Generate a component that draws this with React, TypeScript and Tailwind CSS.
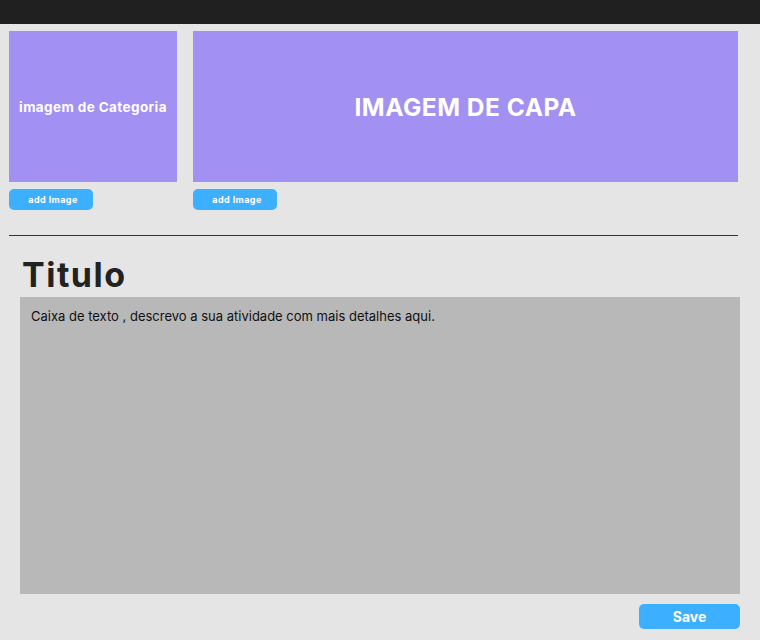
const font = "font-['Inter','Open_Sans',sans-serif]";

const ImageSlot = ({ label, className, textClass }: { label: string; className: string; textClass: string }) => (
  <div className={`flex flex-col gap-[7px] ${className}`}>
    <div className="flex h-[151px] items-center justify-center bg-[#a290f2]">
      <span className={`font-bold text-white ${textClass}`}>{label}</span>
    </div>
    <button className="flex h-[21px] w-[84px] items-center justify-center rounded-[5px] bg-[#3cb0ff] pl-1 text-[9px] tracking-[0.4px] font-bold text-white">
      add Image
    </button>
  </div>
);

export default function App() {
  return (
    <div className={`flex h-[640px] w-[760px] flex-col bg-[#e5e5e5] ${font}`}>
      <div className="h-6 bg-[#202020]" />
      <div className="flex gap-4 pl-[9px] pr-[22px] pt-[7px]">
        <ImageSlot label="imagem de Categoria" className="w-[168px]" textClass="text-[13.5px] tracking-[0.4px] mt-[2px]" />
        <ImageSlot label="IMAGEM DE CAPA" className="flex-1" textClass="text-[24.5px] tracking-[0.5px] mt-[2px]" />
      </div>
      <div className="mx-[9px] mr-[22px] mt-[25px] h-px bg-[#333]" />
      <div className="flex flex-1 flex-col pl-5 pr-5">
        <h1 className="ml-[2px] mt-[18px] text-[34px] leading-[41px] tracking-[1.5px] font-bold text-[#222]">Titulo</h1>
        <div className="mt-[2px] h-[297px] bg-[#b8b8b8] px-[11px] pt-[10px] text-[13px] text-[#111]">
          Caixa de texto , descrevo a sua atividade com mais detalhes aqui.
        </div>
        <div className="mt-[10px] flex justify-end">
          <button className="h-[25px] w-[101px] rounded-[5px] bg-[#3cb0ff] text-[14px] font-bold text-white">
            Save
          </button>
        </div>
      </div>
    </div>
  );
}
